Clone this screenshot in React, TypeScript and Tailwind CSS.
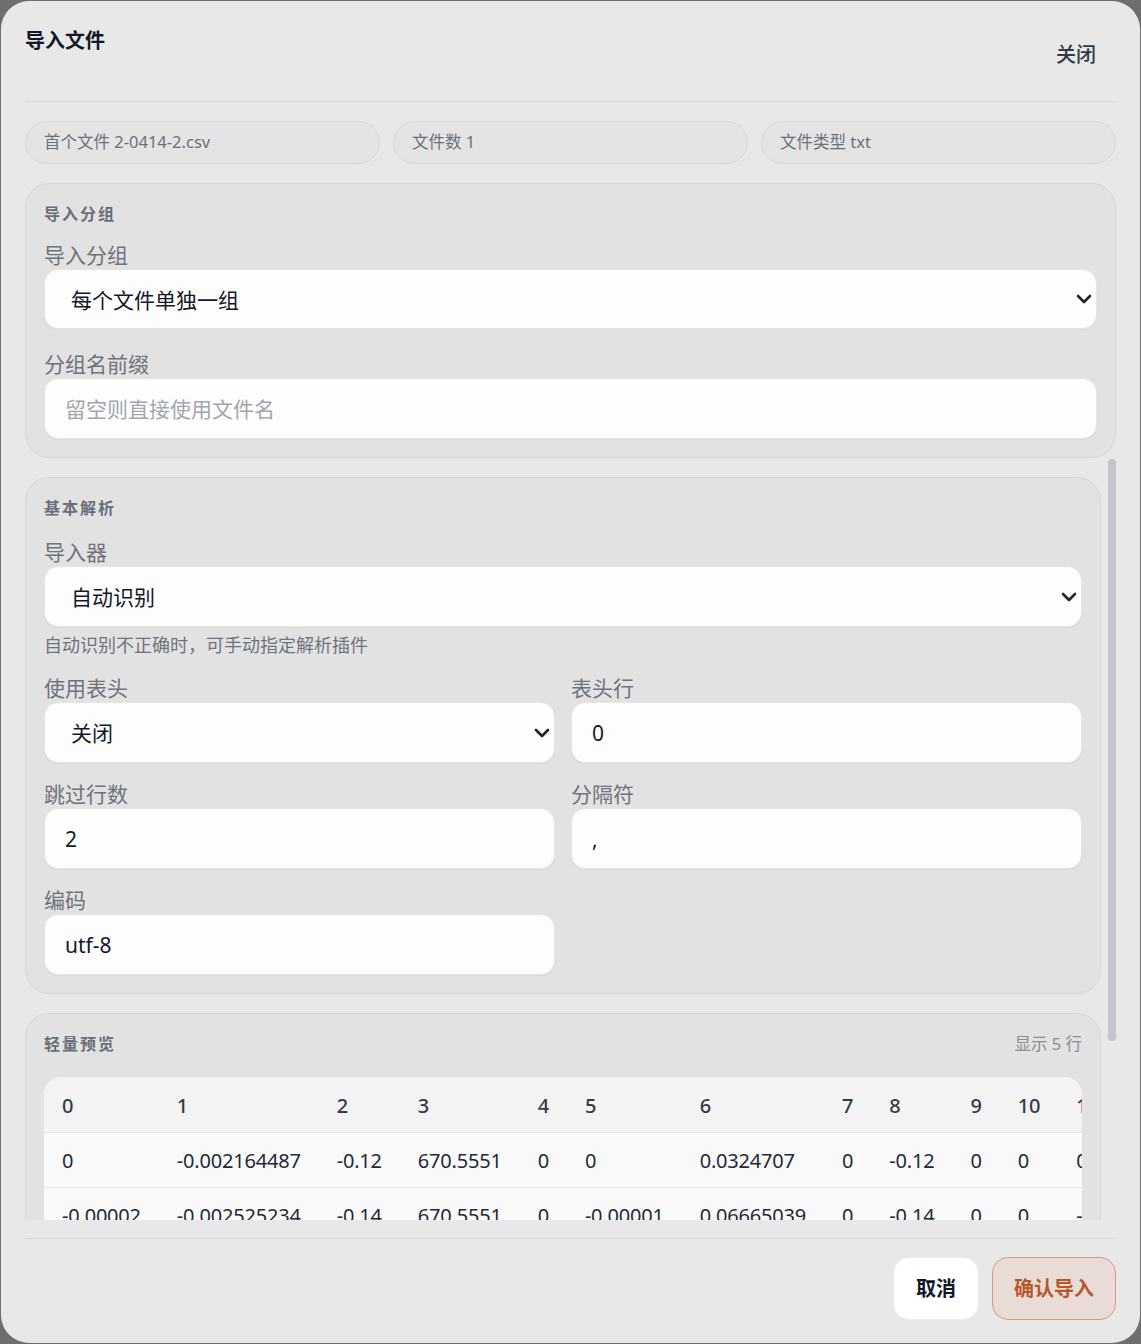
import { ChevronDown } from 'lucide-react'

const font = { fontFamily: '"Noto Sans", "Noto Sans CJK SC", sans-serif' }

const columns = Array.from({ length: 16 }, (_, i) => String(i))

const rows = [
  ['0', '-0.002164487', '-0.12', '670.5551', '0', '0', '0.0324707', '0', '-0.12', '0', '0', '0', '0', '0', '0', '0'],
  ['-0.00002', '-0.002525234', '-0.14', '670.5551', '0', '-0.00001', '0.06665039', '0', '-0.14', '0', '0', '-0.00001', '0', '0', '0', '0'],
  ['-0.00001', '-0.002341876', '-0.13', '670.5551', '0', '0', '0.0512695', '0', '-0.13', '0', '0', '0', '0', '0', '0', '0'],
  ['0', '-0.002198765', '-0.12', '670.5551', '0', '-0.00001', '0.0417480', '0', '-0.12', '0', '0', '0', '0', '0', '0', '0'],
  ['-0.00002', '-0.002410032', '-0.14', '670.5551', '0', '0', '0.0598144', '0', '-0.14', '0', '0', '-0.00001', '0', '0', '0', '0'],
]

function SectionTitle({ children }: { children: React.ReactNode }) {
  return <div className="text-[16px] font-bold leading-6 tracking-[2px] text-[#696e78]">{children}</div>
}

function Label({ children }: { children: React.ReactNode }) {
  return <div className="text-[21px] leading-7 text-[#6f737c]">{children}</div>
}

function SelectBox({ value, h = 'h-[61px]' }: { value: string; h?: string }) {
  return (
    <div
      className={`flex ${h} items-center justify-between rounded-[14px] border border-[#e5e5e5] bg-[#fdfdfd] pl-[26px] pt-[3px] text-[21px] text-[#111827] shadow-[0_1px_2px_rgba(0,0,0,0.04)]`}
    >
      <span>{value}</span>
      <ChevronDown size={24} strokeWidth={2.6} className="-mt-[3px] text-[#1f2433]" />
    </div>
  )
}

function InputBox({ value, placeholder }: { value?: string; placeholder?: string }) {
  return (
    <div className="flex h-[61px] items-center rounded-[14px] border border-[#e5e5e5] bg-[#fdfdfd] pl-[20px] pt-[2px] text-[21px] shadow-[0_1px_2px_rgba(0,0,0,0.04)]">
      {value ? (
        <span className="text-[#111827]">{value}</span>
      ) : (
        <span className="text-[#a2a6ad]">{placeholder}</span>
      )}
    </div>
  )
}

export default function App() {
  return (
    <div className="h-screen w-full bg-[#6e6e6e] p-px" style={font}>
      <div className="flex h-full flex-col overflow-hidden rounded-[28px] bg-[#e8e8e8] px-6">
        {/* Header */}
        <div className="flex h-[101px] shrink-0 items-start justify-between border-b border-[#d9d9d9]">
          <h2 className="mt-[26px] text-[20px] font-bold leading-7 text-[#111827]">导入文件</h2>
          <button className="mt-[34px] h-10 px-5 text-[20px] font-medium text-[#343a46]">关闭</button>
        </div>

        {/* Info pills */}
        <div className="mt-[19px] grid shrink-0 grid-cols-3 gap-[13px]">
          {['首个文件 2-0414-2.csv', '文件数 1', '文件类型 txt'].map((t) => (
            <div
              key={t}
              className="flex h-[43px] items-center rounded-full border border-[#d6d6d6] bg-[#e4e4e4] px-[18px] text-[16.5px] text-[#6b7079]"
            >
              {t}
            </div>
          ))}
        </div>

        {/* Group card */}
        <div className="mt-[19px] shrink-0 rounded-[24px] border border-[#d6d6d6] bg-[#e2e2e2] p-[18px]">
          <SectionTitle>导入分组</SectionTitle>
          <div className="mt-[15px]">
            <Label>导入分组</Label>
            <SelectBox value="每个文件单独一组" h="h-[60px]" />
          </div>
          <div className="mt-[21px]">
            <Label>分组名前缀</Label>
            <InputBox placeholder="留空则直接使用文件名" />
          </div>
        </div>

        {/* Scroll area with scrollbar */}
        <div className="flex min-h-0 flex-1 gap-[7px]">
          <div className="min-w-0 flex-1 overflow-hidden pt-[19px]">
            {/* Basic parsing */}
            <div className="rounded-[24px] border border-[#d6d6d6] bg-[#e2e2e2] p-[18px]">
              <SectionTitle>基本解析</SectionTitle>
              <div className="mt-[18px]">
                <Label>导入器</Label>
                <SelectBox value="自动识别" />
                <div className="mt-[6px] text-[18px] leading-6 text-[#6f737c]">自动识别不正确时，可手动指定解析插件</div>
              </div>
              <div className="mt-[17px] grid grid-cols-2 gap-x-4 gap-y-[17px]">
                <div>
                  <Label>使用表头</Label>
                  <SelectBox value="关闭" />
                </div>
                <div>
                  <Label>表头行</Label>
                  <InputBox value="0" />
                </div>
                <div>
                  <Label>跳过行数</Label>
                  <InputBox value="2" />
                </div>
                <div>
                  <Label>分隔符</Label>
                  <InputBox value="," />
                </div>
                <div>
                  <Label>编码</Label>
                  <InputBox value="utf-8" />
                </div>
              </div>
            </div>

            {/* Preview */}
            <div className="mt-[19px] rounded-[24px] border border-[#d6d6d6] bg-[#e2e2e2] p-[18px]">
              <div className="flex items-center justify-between">
                <SectionTitle>轻量预览</SectionTitle>
                <span className="text-[16.5px] text-[#8a8e96]">显示 5 行</span>
              </div>
              <div className="mt-[20px] overflow-hidden rounded-t-[18px] bg-[#f9f9f9]">
                <table className="border-collapse whitespace-nowrap text-left text-[20px] tracking-[-0.2px]">
                  <thead>
                    <tr className="bg-[#f3f3f3]">
                      {columns.map((c) => (
                        <th key={c} className="px-[18px] pb-[12px] pt-[15px] font-medium leading-7 text-[#343a46]">
                          {c}
                        </th>
                      ))}
                    </tr>
                  </thead>
                  <tbody>
                    {rows.map((r, i) => (
                      <tr key={i} className="border-t border-[#e6e6e6]">
                        {r.map((v, j) => (
                          <td key={j} className="px-[18px] pb-[12px] pt-[14px] leading-7 text-[#1f2937]">
                            {v}
                          </td>
                        ))}
                      </tr>
                    ))}
                  </tbody>
                </table>
              </div>
            </div>
          </div>
          <div className="w-2 shrink-0 pt-px">
            <div className="h-[582px] rounded-full bg-[#c4c5c9]" />
          </div>
        </div>

        {/* Footer */}
        <div className="mt-[18px] flex shrink-0 justify-end gap-[13px] border-t border-[#d9d9d9] pb-[23px] pt-[18px]">
          <button className="h-[63px] rounded-[16px] border border-[#ececec] bg-white px-[22px] text-[20px] font-bold text-[#111827]">
            取消
          </button>
          <button className="h-[63px] rounded-[16px] border border-[#d99a7b] bg-[#e9dcd6] px-[21px] text-[20px] font-bold text-[#b5582c]">
            确认导入
          </button>
        </div>
      </div>
    </div>
  )
}
